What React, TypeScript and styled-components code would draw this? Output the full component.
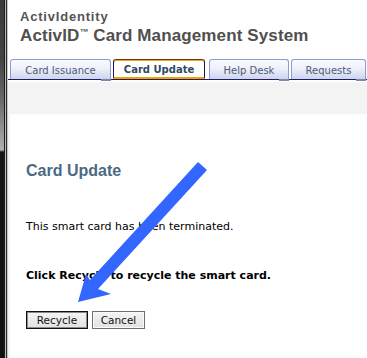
import React from "react";
import styled, { createGlobalStyle, css } from "styled-components";

const Global = createGlobalStyle`
  html, body { margin: 0; padding: 0; background: #ffffff; }
  body { font-family: "DejaVu Sans", Verdana, sans-serif; }
  * { box-sizing: border-box; }
`;

const Frame = styled.div`
  position: relative;
  display: flex;
  width: 367px;
  height: 358px;
  overflow: hidden;
`;

const WindowEdge = styled.div`
  flex: 0 0 8px;
  display: flex;
`;

const EdgeBand = styled.div<{ $w: number; $bg: string }>`
  flex: 0 0 ${(p) => p.$w}px;
  background: ${(p) => p.$bg};
`;

const Main = styled.div`
  flex: 1;
  display: flex;
  flex-direction: column;
  min-width: 0;
`;

const Header = styled.header`
  background: #ffffff;
  padding: 9px 0 0 12px;
  height: 59px;
`;

const Brand = styled.div`
  font-family: "Liberation Sans", Arial, sans-serif;
  font-size: 13px;
  line-height: 15px;
  letter-spacing: 0.8px;
  color: #555555;
  font-weight: 700;
`;

const Title = styled.div`
  margin-top: 2px;
  font-family: "Liberation Sans", Arial, sans-serif;
  font-size: 17px;
  line-height: 20px;
  font-weight: 700;
  letter-spacing: 0.12px;
  color: #505050;
  white-space: nowrap;
`;

const Tm = styled.sup`
  font-size: 9px;
  vertical-align: 6px;
  line-height: 0;
  letter-spacing: 0;
`;

const TabBar = styled.nav`
  display: flex;
  align-items: flex-end;
  gap: 2px;
  padding-left: 2px;
  height: 21px;
  border-bottom: 1px solid #1e1e66;
  background: #ffffff;
`;

const Tab = styled.div<{ $w: number; $active?: boolean }>`
  position: relative;
  flex: 0 0 ${(p) => p.$w}px;
  height: 20px;
  display: flex;
  align-items: center;
  justify-content: center;
  font-size: 10px;
  border-radius: 3px 3px 0 0;
  white-space: nowrap;
  ${(p) =>
    p.$active
      ? css`
          margin-right: 2px;
          background: #ffffff;
          border: 1px solid #14145a;
          border-top-color: #6a3a08;
          border-bottom: 2px solid #f3a000;
          box-shadow: inset 0 1px 0 #f2a21c;
          color: #2f4a66;
          font-weight: 700;
          padding-top: 1px;
        `
      : css`
          background: linear-gradient(#fbfcff 0%, #eef0fa 45%, #cfd4ee 100%);
          border: 1px solid #8c9ccf;
          border-bottom: none;
          color: #4d5d74;
          padding-top: 1px;
          &::after {
            content: "";
            position: absolute;
            right: -1px;
            bottom: -2px;
            width: 10px;
            height: 2px;
            background: #7a88aa;
          }
        `}
`;

const Body = styled.div`
  flex: 1;
  display: flex;
  flex-direction: column;
  padding: 2px 0 0 0;
  background: #ffffff;
`;

const Band = styled.div`
  flex: 1;
  display: flex;
  flex-direction: column;
  background: #f3f3f3;
  padding: 32px 0 0 2px;
`;

const Panel = styled.section`
  flex: 1;
  background: #ffffff;
  padding: 48px 0 0 16px;
`;

const Heading = styled.h1`
  margin: 0;
  font-family: "Liberation Sans", Arial, sans-serif;
  font-size: 16px;
  line-height: 18px;
  font-weight: 700;
  color: #4a6a84;
`;

const Message = styled.p<{ $bold?: boolean; $gap: number }>`
  margin: ${(p) => p.$gap}px 0 0 0;
  font-family: "DejaVu Sans", Verdana, sans-serif;
  font-size: 11px;
  line-height: 13px;
  color: #000000;
  font-weight: ${(p) => (p.$bold ? 700 : 400)};
  white-space: nowrap;
`;

const Buttons = styled.div`
  display: flex;
  gap: 4px;
  margin-top: 29px;
`;

const Button = styled.button<{ $w: number; $default?: boolean }>`
  width: ${(p) => p.$w}px;
  height: 18px;
  padding: 0;
  font-family: "DejaVu Sans", Verdana, sans-serif;
  font-size: 10.5px;
  line-height: 14px;
  color: #111111;
  background: linear-gradient(#f4f4f4, #e2e2e2);
  border: 1px solid ${(p) => (p.$default ? "#111111" : "#707070")};
  box-shadow: inset 0 0 0 1px ${(p) => (p.$default ? "#8c8c8c" : "#fafafa")};
  border-radius: 0;
`;

const ArrowLayer = styled.svg`
  position: absolute;
  left: 0;
  top: 0;
  pointer-events: none;
`;

export default function App() {
  return (
    <>
      <Global />
      <Frame>
        <WindowEdge>
          <EdgeBand
            $w={4}
            $bg="linear-gradient(#3c3c3c 0px, #444 60px, #6a6a6a 100px, #b0b0b0 150px, #151515 152px, #111 358px)"
          />
          <EdgeBand $w={1} $bg="#1a1a1a" />
          <EdgeBand $w={1} $bg="#bdbdbd" />
          <EdgeBand $w={1} $bg="#2a2a2a" />
          <EdgeBand $w={1} $bg="#c8c8c8" />
        </WindowEdge>
        <Main>
          <Header>
            <Brand>ActivIdentity</Brand>
            <Title>
              ActivID<Tm>™</Tm> Card Management System
            </Title>
          </Header>
          <TabBar>
            <Tab $w={101}>Card Issuance</Tab>
            <Tab $w={92} $active>
              Card Update
            </Tab>
            <Tab $w={80}>Help Desk</Tab>
            <Tab $w={75}>Requests</Tab>
          </TabBar>
          <Body>
            <Band>
              <Panel>
                <Heading>Card Update</Heading>
                <Message $gap={40}>This smart card has been terminated.</Message>
                <Message $gap={36} $bold>
                  Click Recycle to recycle the smart card.
                </Message>
                <Buttons>
                  <Button $w={62} $default>
                    Recycle
                  </Button>
                  <Button $w={53}>Cancel</Button>
                </Buttons>
              </Panel>
            </Band>
          </Body>
        </Main>
        <ArrowLayer width={367} height={358} viewBox="0 0 367 358">
          <polygon
            fill="#3366ff"
            points="198,162 207,170 98,289 111,294 78,302 86,274 90,280"
          />
        </ArrowLayer>
      </Frame>
    </>
  );
}
